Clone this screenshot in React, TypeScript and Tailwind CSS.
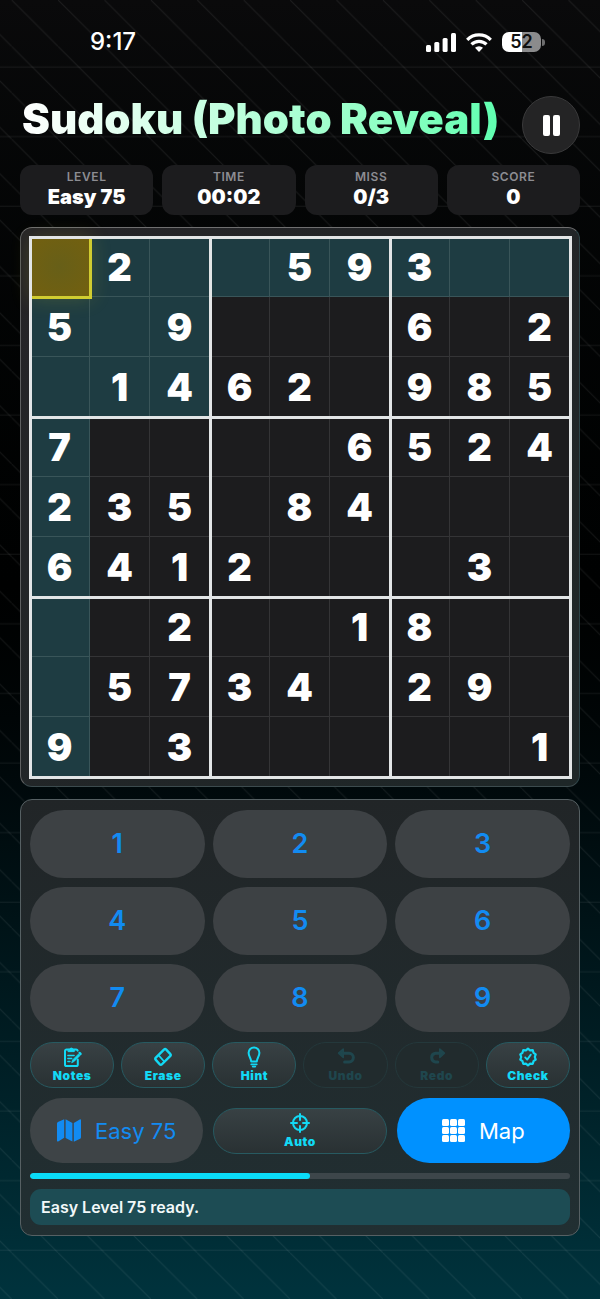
import React from 'react';

const PUZZLE = [
  ' 2  593  ',
  '5 9   6 2',
  ' 1462 985',
  '7    6524',
  '235 84   ',
  '6412   3 ',
  '  2  18  ',
  ' 5734 29 ',
  '9 3     1',
];

const STATS = [
  { label: 'LEVEL', value: 'Easy 75' },
  { label: 'TIME', value: '00:02' },
  { label: 'MISS', value: '0/3' },
  { label: 'SCORE', value: '0' },
];

const stroke = {
  fill: 'none',
  stroke: 'currentColor',
  strokeWidth: 2,
  strokeLinecap: 'round',
  strokeLinejoin: 'round',
} as const;

function NotesIcon() {
  return (
    <svg viewBox="0 0 20 22" className="h-[22px] w-5" {...stroke}>
      <path d="M15.8 13.5v4.9a1.6 1.6 0 0 1-1.6 1.6H4.6A1.6 1.6 0 0 1 3 18.400V5.200a1.600 1.600 0 0 1 1.600-1.600h9.600a1.600 1.600 0 0 1 1.500 1" />
      <path d="M6.400 3.400h1.300a1.700 1.700 0 0 1 3.300 0h1.300v2.200H6.400z" fill="currentColor" strokeWidth="1" />
      <path d="M5.900 9.400h6.200M5.900 12.400h3.800M5.900 15.400h2" strokeWidth="1.500" />
      <path d="M9.800 16.400l.8-2.500 6-6 1.500 1.500-6 6z" fill="currentColor" strokeWidth=".8" />
      <path d="M17.600 6.900l1 1" strokeWidth="2.200" />
    </svg>
  );
}

function EraseIcon() {
  return (
    <svg viewBox="0 0 20 22" className="h-[22px] w-5" {...stroke} strokeWidth="2.400">
      <path d="M11.200 3.400 2.600 11.900a1.200 1.200 0 0 0 0 1.700l4.300 4.900a1.200 1.200 0 0 0 1.800 0l8.700-8.700a1.200 1.200 0 0 0 0-1.700L13 3.400a1.200 1.200 0 0 0-1.800 0z" />
      <path d="M5.700 9.400l5.700 6.300" strokeWidth="1.700" />
    </svg>
  );
}

function HintIcon() {
  return (
    <svg viewBox="0 0 20 22" className="h-[22px] w-5" {...stroke}>
      <path d="M7.200 15.600c0-3.400-2.600-5-2.600-8.800a5.400 5.400 0 0 1 10.800 0c0 3.800-2.600 5.400-2.600 8.800z" />
      <path d="M7.200 18.400h5.600M8.600 20.600h2.800" strokeWidth="1.600" />
    </svg>
  );
}

function UndoIcon() {
  return (
    <svg viewBox="0 0 20 22" className="h-[22px] w-5" {...stroke} strokeWidth="3">
      <path d="M4 7.200h9a4.300 4.300 0 0 1 0 8.700H8.600" />
      <path d="M7.200 3 2.600 7.200l4.600 4.200z" fill="currentColor" strokeWidth="1.600" />
    </svg>
  );
}

function RedoIcon() {
  return (
    <svg viewBox="0 0 20 22" className="h-[22px] w-5" {...stroke} strokeWidth="3">
      <path d="M15 7.200H8.400a4.400 4.400 0 0 0 0 8.700h2.400" />
      <path d="M12.800 3l4.600 4.200-4.600 4.200z" fill="currentColor" strokeWidth="1.600" />
    </svg>
  );
}

function CheckIcon() {
  return (
    <svg viewBox="0 0 20 22" className="h-[22px] w-5" {...stroke} strokeWidth="2.200">
      <path d="M10 2.600l2.100 1.700 2.700-.1.700 2.600 2.200 1.600-.9 2.600.9 2.600-2.200 1.600-.7 2.600-2.700-.1L10 19.400l-2.100-1.700-2.700.1-.7-2.600-2.200-1.600.9-2.600-.9-2.600 2.200-1.600.7-2.600 2.700.1z" />
      <path d="M7.200 11.400l2 2.200 3.600-5" strokeWidth="1.800" />
    </svg>
  );
}

function AutoIcon() {
  return (
    <svg viewBox="0 0 20 22" className="h-[22px] w-5" {...stroke}>
      <circle cx="10" cy="11" r="7" />
      <path d="M10 2v6M10 14v6M1 11h6M13 11h6" />
    </svg>
  );
}

function MapIcon() {
  return (
    <svg viewBox="0 0 24 23" className="h-[23px] w-6" fill="currentColor">
      <path d="M0 4.600Q0 3.600.9 3L7.200.2v18.600L1.200 22.400Q0 23 0 21.800zM8.600.2l6.800 3.700v18.700l-6.800-3.700zM16.800 3.900 22.700.4Q24-.2 24 1.200v17q0 1-.9 1.500l-6.300 3z" />
    </svg>
  );
}

function GridIcon() {
  return (
    <svg viewBox="0 0 23 23" className="size-[23px]" fill="currentColor">
      {[0, 8, 16].map((y) =>
        [0, 8, 16].map((x) => (
          <rect key={`${x}-${y}`} x={x} y={y} width="7" height="7" rx="1.500" />
        )),
      )}
    </svg>
  );
}

const TOOLS = [
  { label: 'Notes', icon: <NotesIcon /> },
  { label: 'Erase', icon: <EraseIcon /> },
  { label: 'Hint', icon: <HintIcon /> },
  { label: 'Undo', icon: <UndoIcon />, disabled: true },
  { label: 'Redo', icon: <RedoIcon />, disabled: true },
  { label: 'Check', icon: <CheckIcon /> },
];

interface ToolButtonProps {
  label: string;
  icon: React.ReactNode;
  disabled?: boolean;
}

function ToolButton({ label, icon, disabled }: ToolButtonProps) {
  return (
    <button
      type="button"
      disabled={disabled}
      className={`flex h-[46px] w-full flex-col items-center justify-center rounded-[23px] border text-[12px] leading-4 font-black tracking-wider ${
        disabled
          ? 'border-[#24383b] bg-[#212b2d] text-[#1f464d]'
          : 'border-[#275a61] bg-linear-to-b from-[#384144] to-[#293133] text-[#12d9f5]'
      }`}
    >
      {icon}
      {label}
    </button>
  );
}

function Backdrop() {
  return (
    <svg className="absolute inset-0 -z-10 h-full w-full" aria-hidden="true">
      <defs>
        <pattern id="rows" width="69.600" height="69.600" y="32" patternUnits="userSpaceOnUse">
          <path d="M0 35h69.600" stroke="#fff" strokeOpacity=".07" />
        </pattern>
        <pattern id="diagonals" width="46.400" height="46.400" x="11.700" patternUnits="userSpaceOnUse">
          <path d="M-1-1l48.400 48.400" stroke="#fff" strokeOpacity=".08" />
        </pattern>
      </defs>
      <rect width="100%" height="100%" fill="url(#rows)" />
      <rect width="100%" height="100%" fill="url(#diagonals)" />
    </svg>
  );
}

function StatusBar() {
  return (
    <div className="flex h-[84px] items-center justify-between pr-[55px] pl-[90px] text-white">
      <span className="text-[24px] leading-7 font-medium">9:17</span>
      <div className="flex items-center gap-[10px]">
        <svg viewBox="0 0 30 19" className="h-[19px] w-[30px]" fill="currentColor">
          <rect y="12" width="5" height="7" rx="1.500" />
          <rect x="8.300" y="9" width="5" height="10" rx="1.500" />
          <rect x="16.600" y="5" width="5" height="14" rx="1.500" />
          <rect x="25" width="5" height="19" rx="1.500" />
        </svg>
        <svg viewBox="0 0 26 19" className="h-[19px] w-[26px]" fill="none" stroke="currentColor" strokeWidth="3.200">
          <path d="M1.200 6.800a16.800 16.800 0 0 1 23.600 0" />
          <path d="M5.500 11.400a10.700 10.700 0 0 1 15 0" />
          <path d="M13 19l-4-4.300a6 6 0 0 1 8 0z" fill="currentColor" stroke="none" />
        </svg>
        <div className="flex items-center gap-px">
          <div className="flex h-5 w-[39px] items-center justify-center rounded-[7px] bg-linear-to-r from-white from-52% to-[#8b8b8c] to-52% text-[18px] leading-5 font-semibold text-[#101010]">
            52
          </div>
          <div className="h-[7px] w-[3px] rounded-r-full bg-[#6d6d6e]" />
        </div>
      </div>
    </div>
  );
}

function Board() {
  return (
    <div className="rounded-xl border border-t-[#6f6f70] border-r-[#2c4347] border-b-[#3c4b4e] border-l-[#5f6061] bg-linear-to-br from-[#252427] to-[#1e2728] p-[9px]">
      <div className="relative grid aspect-square grid-cols-9 grid-rows-9">
        {PUZZLE.map((row, r) =>
          row.split('').map((digit, c) => {
            const selected = r === 0 && c === 0;
            const related = r === 0 || c === 0 || (r < 3 && c < 3);
            return (
              <button
                key={`${r}-${c}`}
                type="button"
                aria-label={`Row ${r + 1} column ${c + 1}`}
                className={`flex min-h-0 min-w-0 items-center justify-center border-r border-b text-[38px] leading-none font-black text-white ${
                  selected
                    ? 'relative z-10 -mr-[2px] -mb-[2px] border-r-[3px] border-b-[3px] border-[#d0cc30] bg-[radial-gradient(circle,#675f18,#73600f)] shadow-[0_0_20px_rgba(200,190,40,0.2)]'
                    : related
                      ? 'border-[#395559] bg-[#1e3c42]'
                      : 'border-[#343436] bg-[#1c1c1e]'
                }`}
              >
                {digit.trim()}
              </button>
            );
          }),
        )}
        <div className="pointer-events-none absolute -top-px -right-[2px] -bottom-[2px] -left-px z-20 border-[3px] border-[#e2e5e6]" />
        <div className="pointer-events-none absolute inset-y-0 left-1/3 z-20 -ml-px w-[3px] bg-[#e2e5e6]" />
        <div className="pointer-events-none absolute inset-y-0 left-2/3 z-20 -ml-px w-[3px] bg-[#e2e5e6]" />
        <div className="pointer-events-none absolute inset-x-0 top-1/3 z-20 -mt-px h-[3px] bg-[#e2e5e6]" />
        <div className="pointer-events-none absolute inset-x-0 top-2/3 z-20 -mt-px h-[3px] bg-[#e2e5e6]" />
      </div>
    </div>
  );
}

function Controls() {
  return (
    <div className="mt-3 flex flex-col gap-[10px] rounded-xl border border-[#566063] bg-linear-to-b from-[#212527] to-[#212f32] px-[9px] py-[10px]">
      <div className="grid grid-cols-3 gap-x-2 gap-y-[9px]">
        {[1, 2, 3, 4, 5, 6, 7, 8, 9].map((n) => (
          <button
            key={n}
            type="button"
            className="h-17 rounded-full bg-[#3d4144] text-[27px] leading-8 font-semibold text-[#128bf2]"
          >
            {n}
          </button>
        ))}
      </div>
      <div className="grid grid-cols-6 gap-[7px]">
        {TOOLS.map((tool) => (
          <ToolButton key={tool.label} {...tool} />
        ))}
      </div>
      <div className="grid grid-cols-3 items-center gap-[10px]">
        <button
          type="button"
          className="flex h-[65px] items-center justify-center gap-[14px] rounded-full bg-[#3e4447] text-[22px] leading-7 text-[#128bf2]"
        >
          <MapIcon />
          Easy 75
        </button>
        <ToolButton label="Auto" icon={<AutoIcon />} />
        <button
          type="button"
          className="flex h-[65px] items-center justify-center gap-[14px] rounded-full bg-[#0091ff] text-[22px] leading-7 text-white"
        >
          <GridIcon />
          Map
        </button>
      </div>
      <div className="h-[6px] overflow-hidden rounded-full bg-[#3d464a]">
        <div className="h-full rounded-full bg-[#0adcf8]" style={{ width: `${(280 / 540) * 100}%` }} />
      </div>
      <p className="rounded-[11px] bg-[#1d4c54] px-[11px] py-2 text-[16px] leading-5 font-semibold text-[#f2f8f9]">
        Easy Level 75 ready.
      </p>
    </div>
  );
}

export default function App() {
  return (
    <div className="relative isolate min-h-screen bg-linear-to-b from-[#0a0a0b] via-[#000101] via-45% to-[#00333d] font-['Inter','Liberation_Sans',sans-serif]">
      <Backdrop />
      <StatusBar />
      <main className="px-5">
        <header className="flex h-[81px] items-start justify-between pt-3">
          <h1 className="bg-linear-to-r from-white via-[#b5ffd9] to-[#5effb0] bg-clip-text pl-[2px] text-[42px] leading-[46px] font-black whitespace-nowrap text-transparent">
            Sudoku (Photo Reveal)
          </h1>
          <button
            type="button"
            aria-label="Pause"
            className="flex size-[58px] shrink-0 items-center justify-center gap-[3px] rounded-full border border-[#39393a] bg-[#242425]"
          >
            <span className="h-[21px] w-[7px] rounded-[2px] bg-white" />
            <span className="h-[21px] w-[7px] rounded-[2px] bg-white" />
          </button>
        </header>
        <section className="mb-3 grid grid-cols-4 gap-[9px]">
          {STATS.map(({ label, value }) => (
            <div key={label} className="flex h-[50px] flex-col items-center rounded-xl bg-[#1c1c1e] pt-1">
              <span className="text-[12px] leading-4 font-semibold tracking-wider text-[#8d8d92]">{label}</span>
              <span className="text-[20px] leading-6 font-black text-white">{value}</span>
            </div>
          ))}
        </section>
        <Board />
        <Controls />
      </main>
    </div>
  );
}
